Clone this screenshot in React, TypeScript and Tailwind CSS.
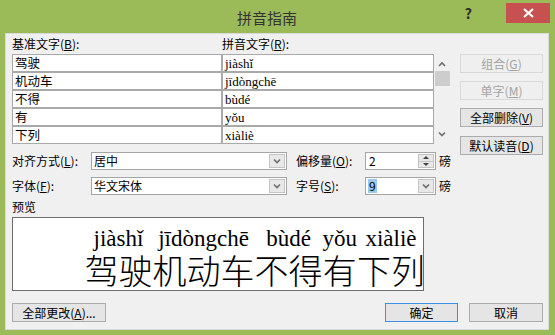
import clsx from "clsx"

const ui = "font-['Noto_Sans_CJK_SC','Liberation_Sans',sans-serif]"

const rows = [
  { base: "驾驶", ruby: "jiàshǐ" },
  { base: "机动车", ruby: "jīdòngchē" },
  { base: "不得", ruby: "bùdé" },
  { base: "有", ruby: "yǒu" },
  { base: "下列", ruby: "xiàliè" },
]

function Chevron({ up }: { up?: boolean }) {
  return (
    <svg width="8" height="6" viewBox="0 0 8 6">
      <polyline
        points={up ? "1,5 4,2 7,5" : "1,1.5 4,4.5 7,1.5"}
        fill="none"
        stroke="#6d6d6d"
        strokeWidth="1.6"
      />
    </svg>
  )
}

function Btn({
  children,
  disabled,
  primary,
  className,
}: {
  children: React.ReactNode
  disabled?: boolean
  primary?: boolean
  className?: string
}) {
  return (
    <div
      className={clsx(
        "flex h-[19px] items-center justify-center border text-[12px] leading-none",
        disabled && "border-[#d9d9d9] bg-[#efefef] text-[#a3a3a3]",
        primary && "border-[#3c91e6] bg-[#e5e5e5] text-black",
        !disabled && !primary && "border-[#acacac] bg-[#e5e5e5] text-black",
        className,
      )}
    >
      {children}
    </div>
  )
}

function Combo({ value, width, selected }: { value: string; width: string; selected?: boolean }) {
  return (
    <div className={clsx("flex h-[18px] border border-[#a5a5a5] bg-white", width)}>
      <div className="flex flex-1 items-center pl-[2px]">
        <span className={clsx("leading-[14px]", selected && "bg-[#99c9ef] px-[1px]")}>{value}</span>
      </div>
      <div className="m-[1px] flex w-[16px] items-center justify-center border border-[#c4c4c4] bg-[#e8e8e8]">
        <Chevron />
      </div>
    </div>
  )
}

function Spin({ value }: { value: string }) {
  return (
    <div className="flex h-[18px] w-[71px] border border-[#a5a5a5] bg-white">
      <div className="flex flex-1 items-center pl-[3px] leading-[14px]">{value}</div>
      <div className="m-[1px] flex w-[16px] flex-col border border-[#c4c4c4] bg-[#e8e8e8]">
        <div className="flex flex-1 items-center justify-center border-b border-[#c4c4c4]">
          <div className="h-0 w-0 border-x-[3px] border-b-[3px] border-x-transparent border-b-[#444]" />
        </div>
        <div className="flex flex-1 items-center justify-center">
          <div className="h-0 w-0 border-x-[3px] border-t-[3px] border-x-transparent border-t-[#444]" />
        </div>
      </div>
    </div>
  )
}

export default function App() {
  return (
    <div className={clsx("flex h-[335px] w-[555px] flex-col bg-[#9bbb59] text-[12px] text-black", ui)}>
      <div className="flex h-[33px] shrink-0">
        <div className="flex flex-1 justify-center pl-[69px] pt-[9px] text-[15px] leading-[18px] text-[#333]">
          拼音指南
        </div>
        <div className="mr-[34px] pt-[5px] text-[14px] font-bold leading-[16px] text-[#2a2a2a]">?</div>
        <div className="mr-[5px] mt-[3px] flex h-[20px] w-[44px] items-center justify-center bg-[#c75050]">
          <svg width="11" height="10" viewBox="0 0 11 10">
            <path d="M1 1 L10 9 M10 1 L1 9" stroke="white" strokeWidth="2.2" />
          </svg>
        </div>
      </div>

      <div className="mb-[5px] ml-[5px] flex w-[544px] flex-1 flex-col border border-[#dadada] bg-[#f0f0f0] pl-[6px] pr-[5px]">
        <div className="flex">
          <div className="flex w-[440px] flex-col">
            <div className="flex h-[20px] pt-[3px] leading-[14px]">
              <span className="w-[210px]">
                基准文字(<u>B</u>):
              </span>
              <span>
                拼音文字(<u>R</u>):
              </span>
            </div>

            <div className="flex h-[90px]">
              <div className="grid w-[422px] grid-cols-[208px_1fr] gap-[2px] bg-[#a9a9a9] p-[1px]">
                {rows.map((r) => (
                  <div key={r.base} className="contents">
                    <div className="flex items-center bg-white pl-[2px] text-[12.5px] leading-none">{r.base}</div>
                    <div className="flex items-center bg-white pl-[2px] font-['Liberation_Serif',serif] text-[13px] leading-none">
                      {r.ruby}
                    </div>
                  </div>
                ))}
              </div>
              <div className="flex w-[16px] flex-col items-center">
                <div className="flex h-[17px] items-center pt-[3px]">
                  <Chevron up />
                </div>
                <div className="h-[15px] w-[15px] bg-[#cdcdcd]" />
                <div className="flex-1" />
                <div className="flex h-[17px] items-center pb-[3px]">
                  <Chevron />
                </div>
              </div>
            </div>

            <div className="mt-[8px] flex h-[18px] items-center leading-[14px]">
              <span className="w-[79px]">
                对齐方式(<u>L</u>):
              </span>
              <Combo value="居中" width="w-[196px]" />
              <span className="ml-[9px] w-[69px]">
                偏移量(<u>O</u>):
              </span>
              <Spin value="2" />
              <span className="ml-[3px]">磅</span>
            </div>

            <div className="mt-[7px] flex h-[18px] items-center leading-[14px]">
              <span className="w-[79px]">
                字体(<u>F</u>):
              </span>
              <Combo value="华文宋体" width="w-[196px]" />
              <span className="ml-[9px] w-[69px]">
                字号(<u>S</u>):
              </span>
              <Combo value="9" width="w-[71px]" selected />
              <span className="ml-[3px]">磅</span>
            </div>

            <div className="h-[22px] pt-[5px] leading-[14px]">预览</div>

            <div className="flex h-[74px] w-[412px] justify-end overflow-hidden border border-[#6e6e6e] bg-white pt-[9px]">
              <div className="-mr-[2px] flex">
                {rows.map((r) => (
                  <div key={r.base} className="flex flex-col items-center">
                    <span className="font-['Liberation_Serif',serif] text-[23px] leading-[23px]">{r.ruby}</span>
                    <span className="font-['Noto_Sans_CJK_SC',sans-serif] text-[34px] font-light leading-[40px]">
                      {r.base}
                    </span>
                  </div>
                ))}
              </div>
            </div>
          </div>

          <div className="ml-[8px] flex w-[83px] flex-col gap-[8px] pt-[20px]">
            <Btn disabled>
              组合(<u>G</u>)
            </Btn>
            <Btn disabled>
              单字(<u>M</u>)
            </Btn>
            <Btn>
              全部删除(<u>V</u>)
            </Btn>
            <Btn className="mt-[1px]">
              默认读音(<u>D</u>)
            </Btn>
          </div>
        </div>

        <div className="mt-[12px] flex">
          <Btn className="w-[94px]">
            全部更改(<u>A</u>)...
          </Btn>
          <Btn primary className="ml-auto w-[73px]">
            确定
          </Btn>
          <Btn className="ml-[11px] w-[74px]">取消</Btn>
        </div>
      </div>
    </div>
  )
}
